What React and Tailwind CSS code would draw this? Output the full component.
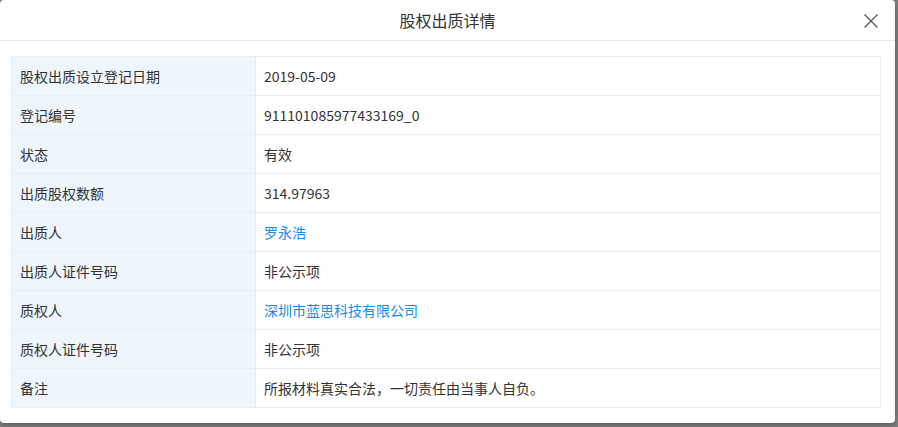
import React from "react";

const ROWS = [
  { label: "股权出质设立登记日期", value: "2019-05-09" },
  { label: "登记编号", value: "911101085977433169_0" },
  { label: "状态", value: "有效" },
  { label: "出质股权数额", value: "314.97963" },
  { label: "出质人", value: "罗永浩", link: true },
  { label: "出质人证件号码", value: "非公示项" },
  { label: "质权人", value: "深圳市蓝思科技有限公司", link: true },
  { label: "质权人证件号码", value: "非公示项" },
  { label: "备注", value: "所报材料真实合法，一切责任由当事人自负。" },
];

export default function App() {
  return (
    <div
      className="w-[898px] h-[427px] bg-[#7f7f7f] overflow-hidden"
      style={{ fontFamily: '"Noto Sans CJK SC", "Liberation Sans", sans-serif' }}
    >
      <div className="w-[895px] h-[423px] bg-white rounded-[4px] shadow-[0_2px_6px_rgba(0,0,0,0.3)] flex flex-col">
        {/* header */}
        <div className="relative h-[41px] shrink-0 border-b border-[#e8e8e8] flex items-center justify-center">
          <span className="text-[16px] text-[#333] leading-none">股权出质详情</span>
          <button className="absolute right-[16px] top-[13px] w-[16px] h-[16px] text-[#555]">
            <svg viewBox="0 0 16 16" width="16" height="16" fill="none" stroke="currentColor" strokeWidth="1.3">
              <path d="M1.5 1.5 L14.5 14.5 M14.5 1.5 L1.5 14.5" />
            </svg>
          </button>
        </div>

        {/* body */}
        <div className="pt-[15px] pl-[11px] pr-[14px]">
          <table className="w-full border-collapse text-[14px] text-[#333]">
            <tbody>
              {ROWS.map((r, i) => (
                <tr key={i} className="h-[39px]">
                  <td className="w-[244px] border border-[#e4eef6] bg-[#eef5fc] px-[8px] py-0">{r.label}</td>
                  <td className={"border border-[#e4eef6] px-[8px] py-0 " + (r.link ? "text-[#128bed]" : "")}>
                    {r.value}
                  </td>
                </tr>
              ))}
            </tbody>
          </table>
        </div>
      </div>
    </div>
  );
}
